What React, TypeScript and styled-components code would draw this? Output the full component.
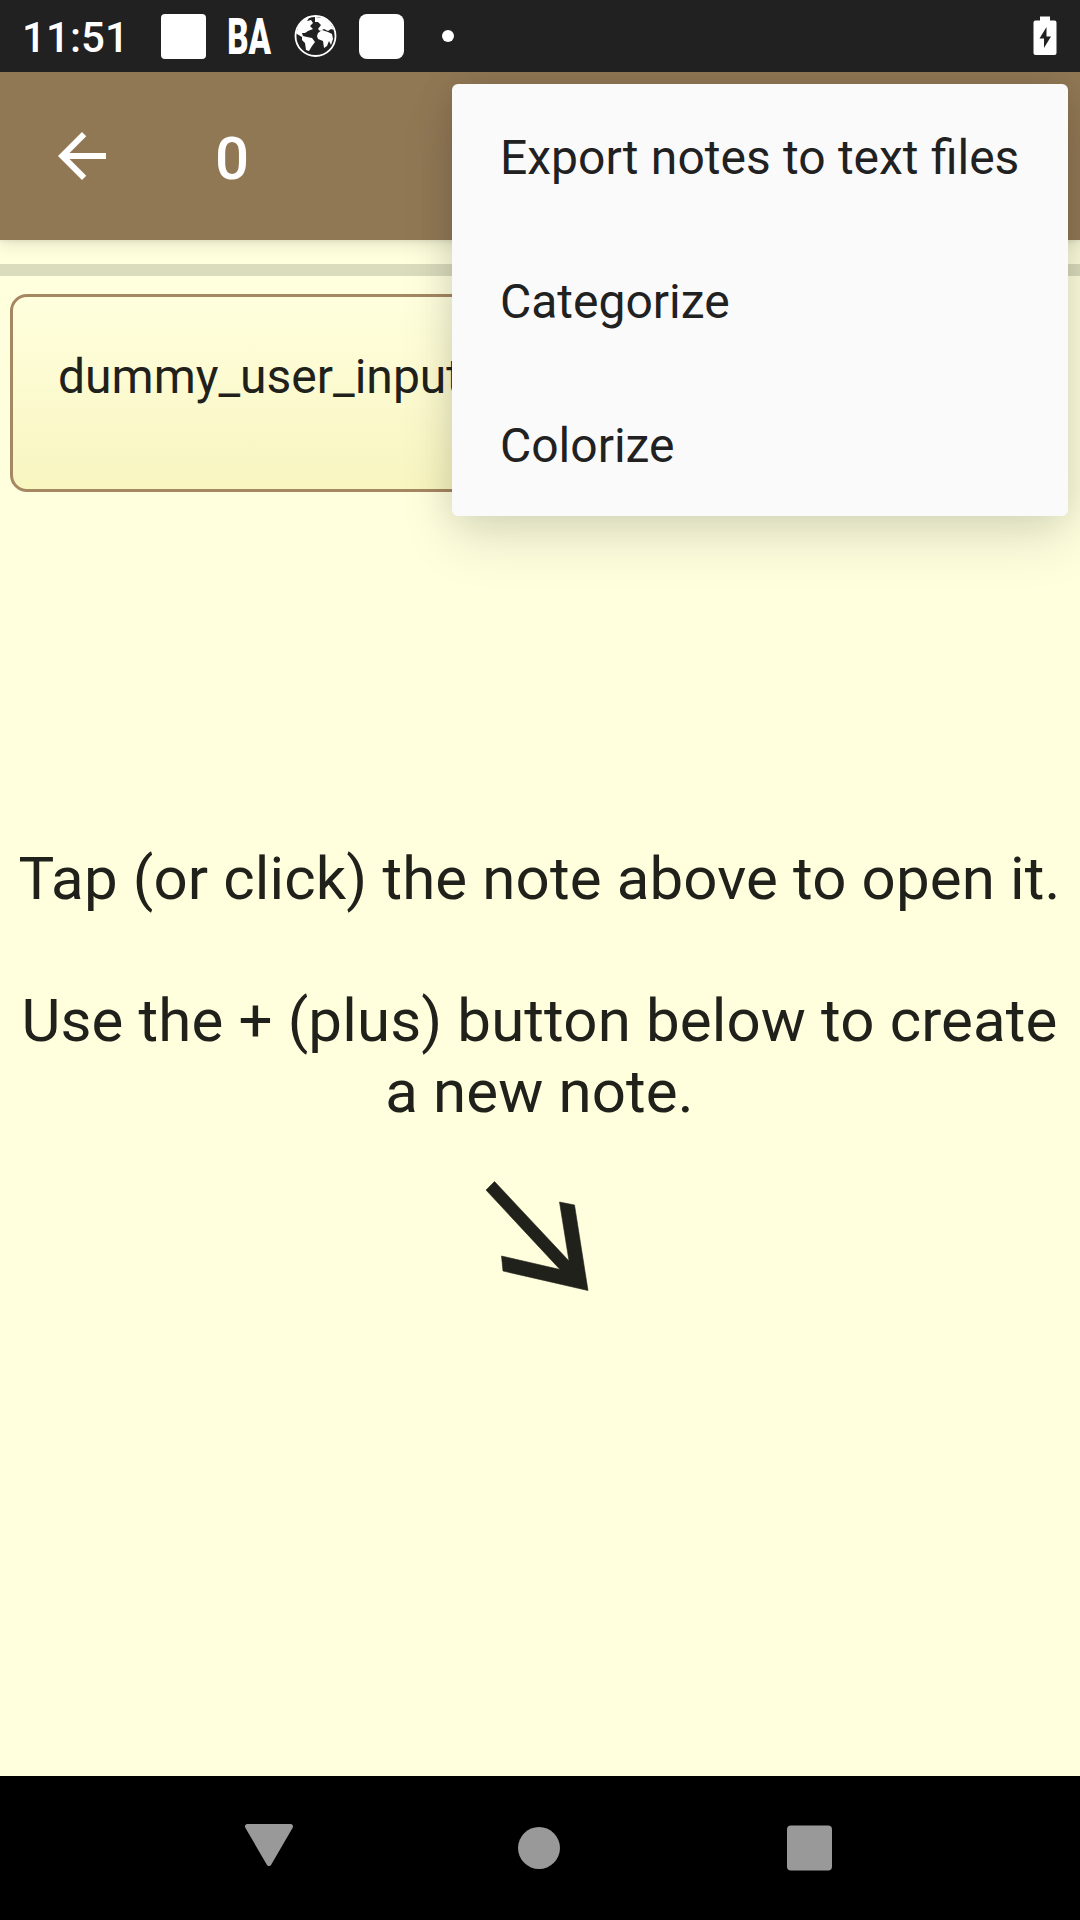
import React from "react";
import styled, { createGlobalStyle } from "styled-components";

const GlobalStyle = createGlobalStyle`
  *, *::before, *::after { box-sizing: border-box; }
  body {
    margin: 0;
    background: #ffffde;
    font-family: Roboto, "Noto Sans", sans-serif;
    color: #212121;
  }
`;

const Screen = styled.div`
  position: relative;
  display: flex;
  flex-direction: column;
  width: 1080px;
  height: 1920px;
  overflow: hidden;
  background: #ffffde;
`;

const StatusBar = styled.header`
  display: flex;
  flex: none;
  align-items: center;
  justify-content: space-between;
  height: 72px;
  padding: 0 23.5px 0 22px;
  background: #212121;
  color: #fff;
  position: relative;
  z-index: 3;
`;

const StatusGroup = styled.div`
  display: flex;
  align-items: center;
`;

const Clock = styled.span`
  width: 128px;
  padding-top: 3px;
  font-size: 42px;
  font-weight: 500;
  line-height: 72px;
  letter-spacing: 0.1px;
`;

const StatusSlot = styled.div`
  display: flex;
  align-items: center;
  justify-content: center;
  width: 66px;
  height: 72px;
`;

const AppSquare = styled.span<{ $radius: number }>`
  width: 45px;
  height: 45px;
  border-radius: ${(p) => p.$radius}px;
  background: #fff;
`;

const AppLetters = styled.span`
  padding-top: 1px;
  font-size: 50px;
  font-weight: 900;
  line-height: 72px;
  transform: scaleX(0.66);
`;

const Dot = styled.span`
  width: 12px;
  height: 12px;
  margin-left: 2px;
  border-radius: 50%;
  background: #fff;
`;

const AppBar = styled.div`
  display: flex;
  flex: none;
  align-items: center;
  height: 168px;
  padding-left: 46px;
  gap: 97px;
  background: #917855;
  color: #fff;
  box-shadow: 0 4px 16px rgba(0, 0, 0, 0.11), 0 1px 5px rgba(0, 0, 0, 0.08);
`;

const Title = styled.h1`
  margin: 5px 0 0;
  font-size: 60px;
  font-weight: 500;
  line-height: 70px;
`;

const Divider = styled.hr`
  flex: none;
  width: 100%;
  height: 12px;
  margin: 24px 0 18px;
  border: 0;
  background: #dbdbbd;
`;

const NoteCard = styled.article`
  flex: none;
  width: 520px;
  height: 198px;
  margin: 0 10px;
  padding: 52px 45px;
  border: 3px solid #a58762;
  border-radius: 17px;
  background: linear-gradient(#ffffde, #f8f5c0);
  font-size: 48px;
  line-height: 56px;
  color: #21211c;
`;

const Hint = styled.main`
  display: flex;
  flex: 1;
  flex-direction: column;
  align-items: center;
  padding-top: 351px;
  text-align: center;
  font-size: 60px;
  line-height: 71px;
  letter-spacing: 0.14px;
  color: #21211c;
`;

const HintText = styled.p`
  margin: 0 0 71px;
  padding-right: 1px;
  white-space: pre;

  & + & { margin-bottom: 0; }
`;

const HintArrow = styled.svg`
  width: 110px;
  height: 120px;
  margin-top: 54px;
`;

const NavBar = styled.nav`
  display: flex;
  flex: none;
  height: 144px;
  padding-left: 134px;
  background: #000;
`;

const NavButton = styled.button`
  display: flex;
  align-items: center;
  justify-content: center;
  width: 270px;
  height: 144px;
  padding: 0;
  border: 0;
  background: none;
`;

const Menu = styled.ul`
  position: absolute;
  z-index: 2;
  top: 84px;
  right: 12px;
  width: 616px;
  margin: 0;
  padding: 0;
  list-style: none;
  border-radius: 6px;
  background: #fafafa;
  box-shadow: 0 24px 56px rgba(0, 0, 0, 0.11), 0 0 36px rgba(0, 0, 0, 0.11);
`;

const MenuItem = styled.li`
  display: flex;
  align-items: center;
  height: 144px;
  padding: 4px 48px 0;
  font-size: 48px;
  line-height: 56px;
  word-spacing: 0.4px;
  white-space: nowrap;
`;

const GlobeIcon = () => (
  <svg width="44" height="44" viewBox="0 0 44 44">
    <circle cx="22.500" cy="22" r="20" fill="none" stroke="#fff" strokeWidth="1.8" />
    <path
      fill="#fff"
      d="M3 19 6 11 12 5 16 4 14 7 18 6 20 9 17 12 20 15 15 17 12 19 9 19 10 22 14 23 19 24 22 28 19 32 16 37 13 36 12 29 9 26 9 23 4 20Z M22 3 31 4 37 9 41 16 38 15 35 17 31 15 27 17 25 15 28 11 25 8 22 8Z M25 19 29 16 35 18 39 20 40 25 38 31 36 27 34 32 31 34 30 27 25 25 24 22Z"
    />
  </svg>
);

const BatteryIcon = () => (
  <svg width="24" height="40" viewBox="0 0 24 40">
    <path fill="#fff" d="M7 0.500h10v4h4.500a2 2 0 0 1 2 2v30.500a2 2 0 0 1-2 2h-19a2 2 0 0 1-2-2v-30.500a2 2 0 0 1 2-2H7z" />
    <path fill="#212121" d="M13.500 11v9.500h4.500L11 32v-9.500H6.500z" />
  </svg>
);

const BackIcon = () => (
  <svg width="72" height="72" viewBox="0 0 24 24" fill="#fff">
    <path d="M20 11H7.830l5.590-5.590L12 4l-8 8 8 8 1.410-1.410L7.830 13H20v-2z" />
  </svg>
);

const menuItems = ["Export notes to text files", "Categorize", "Colorize"];

export default function App() {
  return (
    <>
      <GlobalStyle />
      <Screen>
        <StatusBar>
          <StatusGroup>
            <Clock>11:51</Clock>
            <StatusSlot><AppSquare $radius={4} /></StatusSlot>
            <StatusSlot><AppLetters>BA</AppLetters></StatusSlot>
            <StatusSlot><GlobeIcon /></StatusSlot>
            <StatusSlot><AppSquare $radius={8} /></StatusSlot>
            <StatusSlot><Dot /></StatusSlot>
          </StatusGroup>
          <BatteryIcon />
        </StatusBar>
        <AppBar>
          <BackIcon />
          <Title>0</Title>
        </AppBar>
        <Divider />
        <NoteCard>dummy_user_input</NoteCard>
        <Hint>
          <HintText>Tap (or click) the note above to open it.</HintText>
          <HintText>{"Use the + (plus) button below to create\na new note."}</HintText>
          <HintArrow viewBox="0 0 110 120">
            <path
              fill="#21211c"
              stroke="#21211c"
              strokeWidth="0.6"
              d="M1 9 9.500 0.500 84 80 74.500 21 89.500 24 103 109.500 18 90 16.500 75 75 88.500Z"
            />
          </HintArrow>
        </Hint>
        <NavBar>
          <NavButton aria-label="Back">
            <svg width="50" height="50" viewBox="0 0 50 50">
              <path d="M3.500 3.500h43L25 40.500z" fill="#999" stroke="#999" strokeWidth="5" strokeLinejoin="round" />
            </svg>
          </NavButton>
          <NavButton aria-label="Home">
            <svg width="44" height="44" viewBox="0 0 44 44"><circle cx="22" cy="22" r="21" fill="#999" /></svg>
          </NavButton>
          <NavButton aria-label="Recents">
            <svg width="46" height="46" viewBox="0 0 46 46"><rect x="1" y="0.500" width="45" height="45" rx="4" fill="#999" /></svg>
          </NavButton>
        </NavBar>
        <Menu>
          {menuItems.map((label) => (
            <MenuItem key={label}>{label}</MenuItem>
          ))}
        </Menu>
      </Screen>
    </>
  );
}
